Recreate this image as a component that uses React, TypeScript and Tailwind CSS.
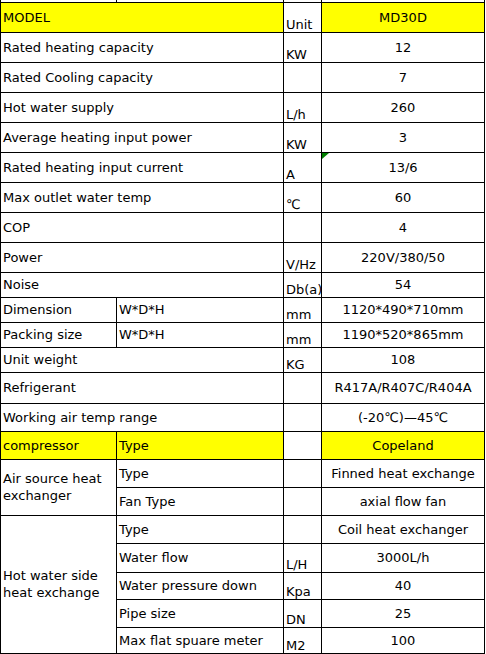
import type { ReactNode } from 'react';

// Spec sheet for the MD30D heat pump, laid out like the spreadsheet it came from.

const YELLOW = 'bg-[#ffff00]';

type CellProps = {
  children?: ReactNode;
  colSpan?: number;
  rowSpan?: number;
  kind?: 'label' | 'unit' | 'value';
  yellow?: boolean;
  wrap?: boolean;
  className?: string;
};

function Cell({ children, colSpan, rowSpan, kind = 'label', yellow, wrap, className = '' }: CellProps) {
  const align =
    kind === 'unit'
      ? 'align-bottom text-left pl-[2px]'
      : kind === 'value'
        ? 'align-middle text-center'
        : 'align-middle text-left pl-[2px]';
  return (
    <td
      colSpan={colSpan}
      rowSpan={rowSpan}
      className={`border border-black p-0 ${wrap ? 'whitespace-normal leading-[17px]' : 'whitespace-nowrap'} ${align} ${yellow ? YELLOW : 'bg-white'} ${className}`}
    >
      {children}
    </td>
  );
}

type SimpleRow = {
  label: string;
  unit?: string;
  value: string;
  h: string;
};

const UPPER_ROWS: SimpleRow[] = [
  { label: 'Rated heating capacity', unit: 'KW', value: '12', h: 'h-[30px]' },
  { label: 'Rated Cooling capacity', value: '7', h: 'h-[30px]' },
  { label: 'Hot water supply', unit: 'L/h', value: '260', h: 'h-[30px]' },
  { label: 'Average heating input power', unit: 'KW', value: '3', h: 'h-[30px]' },
];

const MIDDLE_ROWS: SimpleRow[] = [
  { label: 'Max outlet water temp', unit: '℃', value: '60', h: 'h-[30px]' },
  { label: 'COP', value: '4', h: 'h-[30px]' },
  { label: 'Power', unit: 'V/Hz', value: '220V/380/50', h: 'h-[30px]' },
  { label: 'Noise', unit: 'Db(a)', value: '54', h: 'h-[25px]' },
];

const HOT_WATER_ROWS = [
  { label: 'Water flow', unit: 'L/H', value: '3000L/h', h: 'h-[29px]' },
  { label: 'Water pressure down', unit: 'Kpa', value: '40', h: 'h-[27px]' },
  { label: 'Pipe size', unit: 'DN', value: '25', h: 'h-[28px]' },
  { label: 'Max flat spuare meter', unit: 'M2', value: '100', h: 'h-[26px]' },
];

function Simple({ row }: { row: SimpleRow }) {
  return (
    <tr className={row.h}>
      <Cell colSpan={2}>{row.label}</Cell>
      <Cell kind="unit">{row.unit}</Cell>
      <Cell kind="value">{row.value}</Cell>
    </tr>
  );
}

export default function App() {
  return (
    <div className="w-[486px] h-[654px] overflow-hidden bg-white">
      <table className="table-fixed border-collapse w-[485px] text-[13px] leading-[15px] text-black font-['DejaVu_Sans',sans-serif]">
        <colgroup>
          <col className="w-[116px]" />
          <col className="w-[167px]" />
          <col className="w-[38px]" />
          <col className="w-[163px]" />
        </colgroup>
        <tbody>
          {/* tail of the row above, cut off by the screenshot */}
          <tr className="h-[2px]">
            <td className="border border-black border-t-0 p-0" />
            <td className="border border-black border-t-0 p-0" />
            <td className="border border-black border-t-0 p-0" />
            <td className="border border-black border-t-0 p-0" />
          </tr>

          <tr className="h-[30px]">
            <Cell colSpan={2} yellow>MODEL</Cell>
            <Cell kind="unit">Unit</Cell>
            <Cell kind="value" yellow>MD30D</Cell>
          </tr>

          {UPPER_ROWS.map((row) => (
            <Simple key={row.label} row={row} />
          ))}

          <tr className="h-[30px]">
            <Cell colSpan={2}>Rated heating input current</Cell>
            <Cell kind="unit">A</Cell>
            <Cell kind="value" className="relative">
              <span className="absolute left-0 top-0 w-0 h-0 border-t-[6px] border-t-[#008000] border-r-[7px] border-r-transparent" />
              13/6
            </Cell>
          </tr>

          {MIDDLE_ROWS.map((row) => (
            <Simple key={row.label} row={row} />
          ))}

          <tr className="h-[25px]">
            <Cell>Dimension</Cell>
            <Cell>W*D*H</Cell>
            <Cell kind="unit">mm</Cell>
            <Cell kind="value">1120*490*710mm</Cell>
          </tr>
          <tr className="h-[25px]">
            <Cell>Packing size</Cell>
            <Cell>W*D*H</Cell>
            <Cell kind="unit">mm</Cell>
            <Cell kind="value">1190*520*865mm</Cell>
          </tr>

          <Simple row={{ label: 'Unit weight', unit: 'KG', value: '108', h: 'h-[25px]' }} />
          <Simple row={{ label: 'Refrigerant', value: 'R417A/R407C/R404A', h: 'h-[31px]' }} />
          <Simple row={{ label: 'Working air temp range', value: '(-20℃)—45℃', h: 'h-[28px]' }} />

          <tr className="h-[28px]">
            <Cell yellow>compressor</Cell>
            <Cell yellow>Type</Cell>
            <Cell kind="unit" />
            <Cell kind="value" yellow>Copeland</Cell>
          </tr>

          <tr className="h-[28px]">
            <Cell rowSpan={2} wrap>
              Air source heat exchanger
            </Cell>
            <Cell>Type</Cell>
            <Cell kind="unit" />
            <Cell kind="value">Finned heat exchange</Cell>
          </tr>
          <tr className="h-[28px]">
            <Cell>Fan Type</Cell>
            <Cell kind="unit" />
            <Cell kind="value">axial flow fan</Cell>
          </tr>

          <tr className="h-[28px]">
            <Cell rowSpan={5} wrap>
              Hot water side heat exchange
            </Cell>
            <Cell>Type</Cell>
            <Cell kind="unit" />
            <Cell kind="value">Coil heat exchanger</Cell>
          </tr>
          {HOT_WATER_ROWS.map((row) => (
            <tr key={row.label} className={row.h}>
              <Cell>{row.label}</Cell>
              <Cell kind="unit">{row.unit}</Cell>
              <Cell kind="value">{row.value}</Cell>
            </tr>
          ))}
        </tbody>
      </table>
    </div>
  );
}
